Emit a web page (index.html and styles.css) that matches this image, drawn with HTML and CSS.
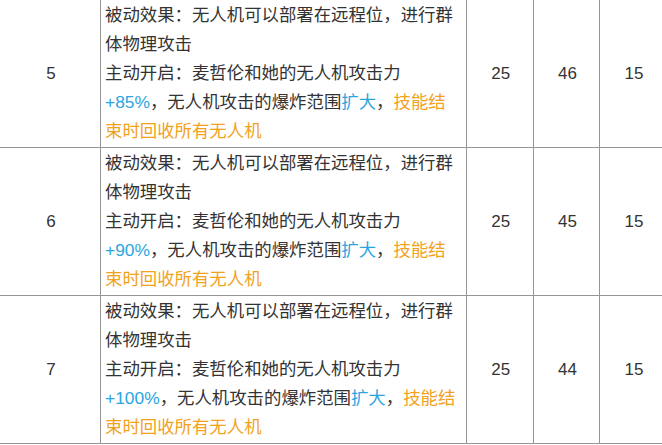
FILE: index.html
```html
<!DOCTYPE html>
<html lang="zh">
<head>
<meta charset="utf-8">
<link rel="stylesheet" href="styles.css">
</head>
<body>
<table class="skill">
  <colgroup>
    <col class="c-lv"><col class="c-desc"><col class="c-n"><col class="c-n"><col class="c-n">
  </colgroup>
  <tr>
    <td class="num">5</td>
    <td class="desc">被动效果：无人机可以部署在远程位，进行群<br>体物理攻击<br>主动开启：麦哲伦和她的无人机攻击力<br><span class="blue">+85%</span>，无人机攻击的爆炸范围<span class="blue">扩大</span>，<span class="orange">技能结<br>束时回收所有无人机</span></td>
    <td class="num">25</td>
    <td class="num">46</td>
    <td class="num">15</td>
  </tr>
  <tr>
    <td class="num">6</td>
    <td class="desc">被动效果：无人机可以部署在远程位，进行群<br>体物理攻击<br>主动开启：麦哲伦和她的无人机攻击力<br><span class="blue">+90%</span>，无人机攻击的爆炸范围<span class="blue">扩大</span>，<span class="orange">技能结<br>束时回收所有无人机</span></td>
    <td class="num">25</td>
    <td class="num">45</td>
    <td class="num">15</td>
  </tr>
  <tr>
    <td class="num">7</td>
    <td class="desc">被动效果：无人机可以部署在远程位，进行群<br>体物理攻击<br>主动开启：麦哲伦和她的无人机攻击力<br><span class="blue">+100%</span>，无人机攻击的爆炸范围<span class="blue">扩大</span>，<span class="orange">技能结<br>束时回收所有无人机</span></td>
    <td class="num">25</td>
    <td class="num">44</td>
    <td class="num">15</td>
  </tr>
</table>
</body>
</html>
```

FILE: styles.css
```css
html, body {
  margin: 0;
  padding: 0;
  background: #ffffff;
  overflow: hidden;
}
body {
  width: 662px;
  height: 445px;
}
.skill {
  border-collapse: collapse;
  table-layout: fixed;
  width: 667px;
  margin-top: -1px;
  margin-left: -1px;
  font-family: "Liberation Sans", "Noto Sans CJK SC", sans-serif;
  font-size: 17.4px;
  color: #333333;
}
.c-lv { width: 101px; }
.c-desc { width: 366px; }
.c-n { width: 66.6px; }
.skill td {
  border: 1px solid #959595;
  padding: 1px 2px 1px 4px;
  line-height: 29px;
  vertical-align: middle;
  height: 145px;
}
.skill td.num {
  text-align: center;
  font-size: 17px;
}
.skill td.desc {
  text-align: left;
  white-space: nowrap;
}
.blue { color: #2aa5de; }
.orange { color: #f2a21c; }
```
